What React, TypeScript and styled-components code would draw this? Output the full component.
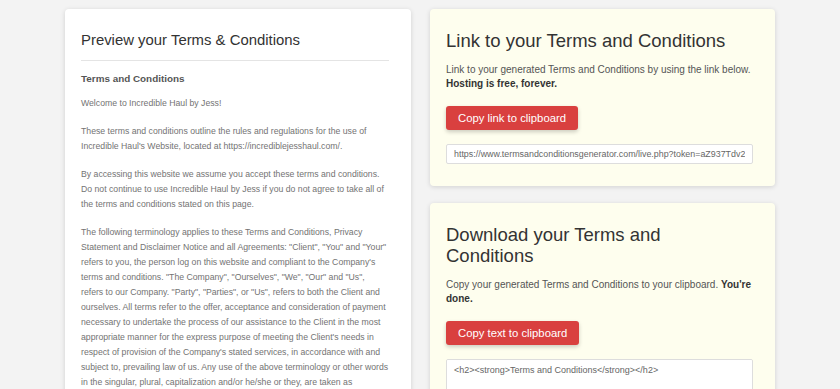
import React from "react";
import styled, { createGlobalStyle } from "styled-components";

const GlobalStyle = createGlobalStyle`
  html, body {
    margin: 0;
    padding: 0;
    background: #f3f3f3;
    font-family: "Liberation Sans", Arial, sans-serif;
  }
`;

const Page = styled.div`
  display: grid;
  grid-template-columns: 346px 345px;
  column-gap: 19px;
  align-items: start;
  width: 710px;
  margin: 0 auto;
  padding-top: 9px;
`;

const Card = styled.section<{ $tint?: boolean }>`
  padding: 21px 22px 22px 16px;
  background: ${(p) => (p.$tint ? "#fefeee" : "#fff")};
  border-radius: 4px;
  box-shadow: 0 1px 5px rgba(0, 0, 0, 0.14);
`;

const Column = styled.div`
  display: flex;
  flex-direction: column;
  gap: 17px;
`;

const PreviewTitle = styled.h2`
  margin: 0;
  padding-bottom: 10px;
  border-bottom: 1px solid #e4e4e4;
  font-size: 14.9px;
  font-weight: normal;
  line-height: 20px;
  color: #333;
`;

const PreviewBody = styled.div`
  padding-top: 10px;
  color: #737373;
  font-size: 8.7px;
  line-height: 15px;

  h3 {
    margin: 0 0 10px;
    font-size: 9.9px;
    line-height: 15px;
    color: #555;
  }

  p {
    margin: 0 0 13px;
  }
`;

const Title = styled.h2`
  margin: 0 0 12px;
  padding-right: 10px;
  font-size: 18.5px;
  font-weight: normal;
  line-height: 21px;
  color: #333;
`;

const Lead = styled.p`
  margin: 0 0 15px;
  font-size: 10px;
  line-height: 14px;
  color: #555;

  strong {
    color: #333;
  }
`;

const RedButton = styled.button`
  display: block;
  height: 24px;
  padding: 0 12px;
  margin-bottom: 14px;
  border: 0;
  border-radius: 3px;
  background: #d9403f;
  color: #fff;
  font-family: inherit;
  font-size: 11.3px;
  box-shadow: 0 2px 4px rgba(0, 0, 0, 0.2);
  cursor: pointer;
`;

const LinkField = styled.input`
  display: block;
  box-sizing: border-box;
  width: 100%;
  height: 20px;
  padding: 0 7px;
  border: 1px solid #ddd;
  border-radius: 2px;
  background: #fff;
  color: #666;
  font-family: inherit;
  font-size: 8.9px;
  outline: none;
`;

const CodeField = styled.textarea`
  display: block;
  box-sizing: border-box;
  width: 100%;
  height: 140px;
  padding: 4px 7px;
  border: 1px solid #ddd;
  border-radius: 2px;
  background: #fff;
  color: #666;
  font-family: inherit;
  font-size: 9px;
  line-height: 13px;
  resize: none;
  overflow-y: scroll;

  &::-webkit-scrollbar {
    width: 10px;
  }
  &::-webkit-scrollbar-track {
    background: #f1f1f1;
  }
  &::-webkit-scrollbar-thumb {
    background: #c1c1c1;
  }
  &::-webkit-scrollbar-button:single-button:vertical:decrement {
    height: 10px;
    background:
      linear-gradient(135deg, transparent 50%, #f1f1f1 50%) 2px 3px / 3px 3px no-repeat,
      linear-gradient(225deg, transparent 50%, #f1f1f1 50%) 5px 3px / 3px 3px no-repeat,
      linear-gradient(#a3a3a3, #a3a3a3) 2px 3px / 6px 3px no-repeat,
      #f1f1f1;
  }
`;

const terms = `<h2><strong>Terms and Conditions</strong></h2>

<p>Welcome to Incredible Haul by Jess!</p>

<p>These terms and conditions outline the rules and regulations for the use of Incredible Haul's Website, located at https://incrediblejesshaul.com/.</p>

<p>By accessing this website we assume you accept these terms and conditions. Do not continue to use Incredible Haul by Jess if you do not agree to take all of the terms and conditions stated on this page.</p>

<p>The following terminology applies to these Terms and Conditions, Privacy Statement and Disclaimer Notice and all Agreements.</p>`;

export default function App() {
  return (
    <>
      <GlobalStyle />
      <Page>
        <Card>
          <PreviewTitle>Preview your Terms &amp; Conditions</PreviewTitle>
          <PreviewBody>
            <h3>Terms and Conditions</h3>
            <p>Welcome to Incredible Haul by Jess!</p>
            <p>
              These terms and conditions outline the rules and regulations for
              the use of Incredible Haul's Website, located at
              https://incrediblejesshaul.com/.
            </p>
            <p>
              By accessing this website we assume you accept these terms and
              conditions. Do not continue to use Incredible Haul by Jess if you
              do not agree to take all of the terms and conditions stated on
              this page.
            </p>
            <p>
              The following terminology applies to these Terms and Conditions,
              Privacy Statement and Disclaimer Notice and all Agreements:
              "Client", "You" and "Your" refers to you, the person log on this
              website and compliant to the Company's terms and conditions. "The
              Company", "Ourselves", "We", "Our" and "Us", refers to our
              Company. "Party", "Parties", or "Us", refers to both the Client
              and ourselves. All terms refer to the offer, acceptance and
              consideration of payment necessary to undertake the process of
              our assistance to the Client in the most appropriate manner for
              the express purpose of meeting the Client's needs in respect of
              provision of the Company's stated services, in accordance with
              and subject to, prevailing law of us. Any use of the above
              terminology or other words in the singular, plural,
              capitalization and/or he/she or they, are taken as
              interchangeable and therefore as referring to same.
            </p>
          </PreviewBody>
        </Card>
        <Column>
          <Card $tint>
            <Title>Link to your Terms and Conditions</Title>
            <Lead>
              Link to your generated Terms and Conditions by using the link
              below. <strong>Hosting is free, forever.</strong>
            </Lead>
            <RedButton>Copy link to clipboard</RedButton>
            <LinkField
              readOnly
              value="https://www.termsandconditionsgenerator.com/live.php?token=aZ937Tdv2LxQm"
            />
          </Card>
          <Card $tint>
            <Title>Download your Terms and Conditions</Title>
            <Lead>
              Copy your generated Terms and Conditions to your clipboard.{" "}
              <strong>You're done.</strong>
            </Lead>
            <RedButton>Copy text to clipboard</RedButton>
            <CodeField readOnly value={terms} />
          </Card>
        </Column>
      </Page>
    </>
  );
}
